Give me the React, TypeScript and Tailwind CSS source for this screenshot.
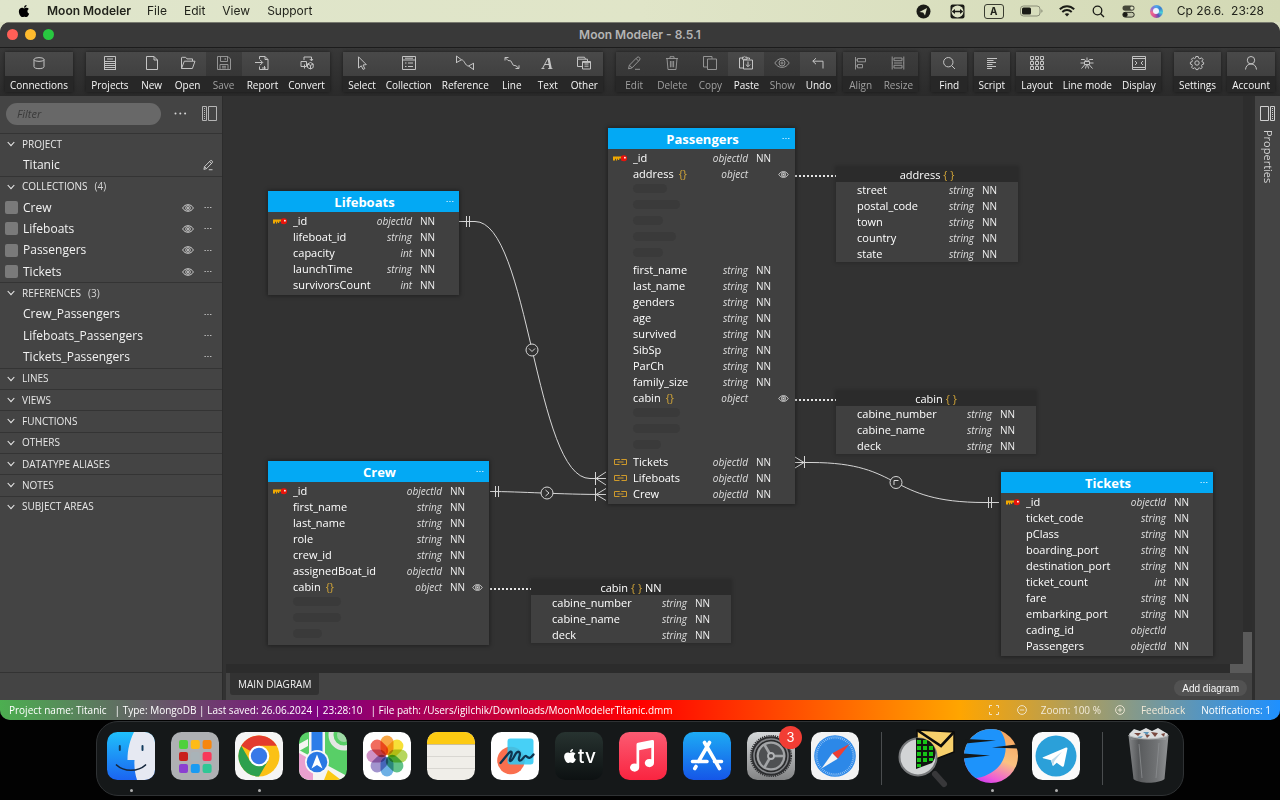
import type { ReactNode } from "react";
import { FaApple } from "react-icons/fa";

/* ---------- small shared icons ---------- */

const Dots = ({ className = "" }: { className?: string }) => (
  <svg width="8" height="3" viewBox="0 0 8 3" className={className} fill="currentColor">
    <rect x="0.5" y="1" width="1.3" height="1" />
    <rect x="3.3" y="1" width="1.3" height="1" />
    <rect x="6.1" y="1" width="1.3" height="1" />
  </svg>
);

const Eye = ({ className = "" }: { className?: string }) => (
  <svg viewBox="0 0 12 8" className={className} fill="none" stroke="currentColor" strokeWidth="1">
    <path d="M0.6 4C2 1.7 3.8 0.7 6 0.7S10 1.7 11.4 4C10 6.3 8.2 7.3 6 7.3S2 6.3 0.6 4z" />
    <circle cx="6" cy="4" r="2.3" />
    <circle cx="6" cy="4" r="0.7" fill="currentColor" />
  </svg>
);

const Chevron = () => (
  <svg width="8" height="6" viewBox="0 0 8 6" fill="none" stroke="currentColor" strokeWidth="1.1">
    <path d="M0.7 1L4 4.6L7.3 1" />
  </svg>
);

const KeyIcon = () => (
  <svg width="14" height="7" viewBox="0 0 14 7">
    <path d="M0 1.6H9V3.6H7.6V3.4H6.2V5H4.9V3.8H4.1V5.4H2.9V3.8H2V5.6H0z" fill="#f2a900" />
    <circle cx="11" cy="3.2" r="3" fill="#e8140c" />
    <rect x="8.2" y="0.8" width="3" height="4.8" fill="#e8140c" />
    <circle cx="11.9" cy="2.7" r="0.9" fill="#fff" />
  </svg>
);

const LinkIcon = () => (
  <svg width="15" height="8" viewBox="0 0 15 8" fill="none" stroke="#cf9a2b" strokeWidth="1">
    <path d="M6.8 1.5H1.5V6.5H6.500M8.300 1.500H13.500V6.500H8.500M4.500 4H10.500" />
  </svg>
);

const Pencil = ({ size = 16 }: { size?: number }) => (
  <svg width={size} height={size} viewBox="0 0 16 16" fill="none" stroke="currentColor" strokeWidth={size < 14 ? 1.2 : 1}>
    <path d="M2.5 13.8L3.4 10.2L11 2.4Q12.3 1.4 13.4 2.5T13.6 5L6 12.9zM10 3.5L12.6 6M3.4 10.2L6 12.9M9 14.3H14" />
  </svg>
);

/* ---------- toolbar ---------- */

const I = ({ children, w = 16 }: { children: ReactNode; w?: number }) => (
  <svg width={w} height="16" viewBox={`0 0 ${w} 16`} fill="none" stroke="currentColor" strokeWidth="1">
    {children}
  </svg>
);

const icons: Record<string, ReactNode> = {
  Connections: (
    <I>
      <ellipse cx="8" cy="4.5" rx="5" ry="1.9" />
      <path d="M3 4.5V11.7C3 14.3 13 14.3 13 11.7V4.5" />
    </I>
  ),
  Projects: (
    <I>
      <path d="M2.5 1.5H13.5V6.5H2.5zM5 4H11M2 8.5H14M2 10.5H14M2 12.5H14M2 14.5H14M2.5 6V15M13.5 6V15" />
    </I>
  ),
  New: (
    <I>
      <path d="M2.5 1.5H10L13.5 5V14.5H2.5zM10 1.5V5H13.5" />
    </I>
  ),
  Open: (
    <I>
      <path d="M1.5 13.5V3Q1.5 2.3 2.2 2.3H5.6L7 3.9H12.5V6M1.5 13.5L4.3 6.2H15L12.4 13.5z" />
    </I>
  ),
  Save: (
    <I>
      <path d="M1.5 1.5H12L14.5 4V14.5H1.5zM4.5 1.5V6.5H11.5V1.5M9.2 3V5M4 14.5V9.5H12V14.5M6 11.3H10M6 12.9H10" />
    </I>
  ),
  Report: (
    <I>
      <path d="M5.5 4V1.5H11L14 4.5V14.5H5.5V11.5M11 1.5V4.5H14M1 7.5H8.5M6 4.8L8.7 7.5L6 10.2M8 13H12M10.5 11V14.5" />
    </I>
  ),
  Convert: (
    <I>
      <path d="M5 5V2H12.5V5.5M10.8 4L12.5 5.9L14 4M2 6.5H7.5V11.5H2zM5.5 9.5V13.5M8.5 9L11.5 7.5L14.2 9V12.5L11.5 14L8.5 12.5zM8.5 9L11.5 10.4L14.2 9M11.5 10.4V14" />
    </I>
  ),
  Select: (
    <I>
      <path d="M4.5 1.8L12.3 9.6L9 10L10.8 13.6L9 14.4L7.3 10.8L4.5 13z" />
    </I>
  ),
  Collection: (
    <I>
      <path d="M1.5 1.5H14.5V14.5H1.5zM1.5 5H14.5M4 3.2H12M4 8H5.5M7 8H12M4 11.5H5.5M7 11.5H12" />
    </I>
  ),
  Reference: (
    <I w={20}>
      <path d="M1.5 1V8M1.500 1L6.500 4.800L1.500 7.500M6.500 4.800C9.500 4.800 10 11 13.500 11M18.500 8V15M18.500 8.300L13.500 11L18.500 14.500" />
    </I>
  ),
  Line: (
    <I>
      <path d="M1 5.500V2.500H4.500M15 10.300V13.500H11.500M1.300 2.800L4 5.500Q7.600 5 8 8T12 10.800L14.700 13.200" />
    </I>
  ),
  Other: (
    <I>
      <path d="M6 11.5H1.5V4.2H11.5V6M1.5 4.2V2.2H8.5L9.5 4.2M6.5 6.5H14.5V14H6.5zM8.5 9H12.5M8.5 11.2H12.5M6.5 7.4H14.5" />
    </I>
  ),
  Edit: <Pencil />,
  Delete: (
    <I>
      <path d="M2 3.5H14M6 3.5V1.7H10V3.5M3 3.5L4 14.5H12L13 3.5M6.4 6V12.3M8 6V12.3M9.6 6V12.3" />
    </I>
  ),
  Copy: (
    <I>
      <path d="M5 12H1.5V1.5H10V3.8M5.5 4H14.5V14.5H5.5z" />
    </I>
  ),
  Paste: (
    <I>
      <path d="M5 13H1.5V3H4.5M9 3H11.5V4.3M4.5 4.3V2.2H6Q6.7 0.8 7.4 2.2H9V4.3zM5.5 5H14.5V14H5.5zM10 6.5V11.5M7.8 9.5L10 11.7L12.2 9.5" />
    </I>
  ),
  Show: (
    <I>
      <path d="M0.8 8C2.8 5 5 3.6 8 3.6S13.2 5 15.2 8C13.2 11 11 12.4 8 12.4S2.8 11 0.8 8z" />
      <circle cx="8" cy="8" r="3" />
      <circle cx="8" cy="8" r="1" />
    </I>
  ),
  Undo: (
    <I>
      <path d="M6 3.2L2.8 6.2L6 9.2M2.8 6.2H13V13.5" />
    </I>
  ),
  Align: (
    <I>
      <path d="M2.5 2V14.5M4.5 3.5H12.5V6.8H4.5zM4.5 9.5H9.5V12.8H4.5zM2.5 5H4.5M2.5 11H4.5" />
    </I>
  ),
  Resize: (
    <I>
      <path d="M2.2 1.5V14.5M13.8 1.5V14.5M4 3H12V5.7H4zM4 10.3H12V13H4zM4 8H12M2.2 8H3M13 8H13.8" />
    </I>
  ),
  Find: (
    <I>
      <circle cx="7.3" cy="7.2" r="4.7" />
      <path d="M10.6 10.6L14 14" />
    </I>
  ),
  Script: (
    <I>
      <path d="M3 3.5H13M3 5.5H9.5M3 7.5H12M3 9.5H8.5M3 11.5H12M3 13.5H8" />
    </I>
  ),
  Layout: (
    <I>
      <path d="M1.5 1.5h3v3h-3zM6.5 1.5h3v3h-3zM11.5 1.5h3v3h-3zM1.5 6.5h3v3h-3zM6.5 6.5h3v3h-3zM11.5 6.5h3v3h-3zM1.5 11.5h3v3h-3zM6.5 11.5h3v3h-3zM11.5 11.5h3v3h-3zM3 4.5v2M8 4.5v2M13 4.5v2M3 9.5v2M8 9.5v2M13 9.5v2" />
    </I>
  ),
  "Line mode": (
    <I>
      <path d="M2 4.500H5.500L7 6.500M14 4.500H10.500L9 6.500M1.500 8H5.500M10.500 8H14.500M8 2.500V6.500M2.500 13.500L6 9.500M13.500 13.500L10 9.500M5.500 6.500H10.500V9.500H5.500zM6.500 13.500L7.500 9.500M9.500 13.500L8.500 9.500" />
    </I>
  ),
  Display: (
    <I>
      <path d="M1.5 1.5H14.5V12.5H1.5zM1.5 3.5H14.5M1.5 14.5H14.5M1.5 12.5V14.5M14.5 12.5V14.5M4 6L6 8L4 10M12 6L10 8L12 10" />
    </I>
  ),
  Settings: (
    <I>
      <circle cx="8" cy="8" r="2.2" />
      <path d="M6.8 1.5H9.2L9.6 3.2L10.9 3.8L12.5 2.8L14 4.6L12.9 6L13.2 7L14.6 7.4V9.2L13 9.6L12.5 10.8L13.3 12.4L11.8 13.8L10.4 12.9L9.4 13.2L9 14.6H7L6.6 13.2L5.5 12.8L4 13.7L2.6 12.2L3.4 10.8L3 9.6L1.4 9.1V7.2L3 6.8L3.4 5.6L2.5 4.2L4 2.7L5.5 3.6L6.5 3.1z" />
    </I>
  ),
  Account: (
    <I>
      <circle cx="8" cy="5.2" r="3.7" />
      <path d="M2.5 14.5C2.8 11 5 9 8 9S13.2 11 13.5 14.5" />
    </I>
  ),
};

type Tool = { label: string; off?: boolean };
const t = (label: string): Tool => ({ label });
const d = (label: string): Tool => ({ label, off: true });

const ToolGroup = ({ tools, className = "" }: { tools: Tool[]; className?: string }) => (
  <div className={`flex h-10 shrink-0 rounded-[3px] shadow-[0_0_3px_1px_rgba(0,0,0,0.3)] ${className}`}>
    {tools.map(({ label, off }) => (
      <button
        key={label}
        disabled={off}
        className={`flex min-w-9 flex-col items-center text-[10px] font-medium whitespace-nowrap ${off ? "text-[#a0a0a0]" : "text-[#f6f6f6]"}`}
      >
        <span
          className={`flex h-6 w-full items-center justify-center bg-linear-to-b pb-[2px] ${
            off ? "from-[#3d3d3d] to-[#363636] text-[#949494]" : "from-[#494949] to-[#404040] text-[#c4c4c4]"
          }`}
        >
          {label === "Text" ? (
            <span aria-hidden className="font-['Liberation_Serif',serif] text-[17px] leading-none font-bold italic">
              A
            </span>
          ) : (
            icons[label]
          )}
        </span>
        <span className="flex h-4 w-full items-center justify-center bg-[#272727] px-[5px] pt-[2px] leading-4">
          {label}
        </span>
      </button>
    ))}
  </div>
);

/* ---------- sidebar ---------- */

const SectionRow = ({ title, count }: { title: string; count?: number }) => (
  <button className="flex items-center border-t border-[#343434] pl-[7px] text-left text-[10px] font-medium text-[#e8e8e8]">
    <Chevron />
    <span className="ml-[7px]">{title}</span>
    {count !== undefined && <span className="ml-[7px] text-[#d4d4d4]">({count})</span>}
  </button>
);

const ItemRow = ({ name, kind }: { name: string; kind: "project" | "collection" | "reference" }) => (
  <div className="flex items-center pr-[10px] pl-[5px] text-[12px] text-[#f2f2f2]">
    <span className={`mr-[5px] size-[13px] rounded-[2px] ${kind === "collection" ? "bg-[#7a7a7a]" : ""}`} />
    <span className="flex-1">{name}</span>
    {kind === "collection" && (
      <button aria-label={`Toggle ${name}`} className="mr-[10px] text-[#c8c8c8]">
        <Eye className="h-2 w-3" />
      </button>
    )}
    {kind === "project" ? (
      <button aria-label="Edit project" className="-mr-1 p-[2px] text-[#d8d8d8]">
        <Pencil size={12} />
      </button>
    ) : (
      <button aria-label={`${name} menu`} className="text-[#c8c8c8]">
        <Dots />
      </button>
    )}
  </div>
);

const PanelIcon = ({ flip = false }: { flip?: boolean }) => (
  <svg width="15" height="15" viewBox="0 0 15 15" fill="none" stroke="currentColor" className={flip ? "-scale-x-100" : ""}>
    <path d="M0.5 0.5H4.5V14.5H0.5zM6.5 0.5H14.5V14.5H6.5z" />
    <path d="M2.5 2V13" strokeDasharray="1 1" />
  </svg>
);

const Sidebar = () => (
  <aside className="flex w-[222px] shrink-0 flex-col bg-[#444444]">
    <div className="flex h-[37px] items-center pb-[2px] pl-[6px]">
      <input
        type="text"
        aria-label="Filter"
        placeholder="Filter"
        className="h-[22px] w-[155px] rounded-full bg-[#686868] px-[11px] text-[11px] italic outline-none placeholder:text-[#3a3a3a]"
      />
      <button aria-label="More" className="ml-[13px] text-[#d6d6d6]">
        <svg width="13" height="3" viewBox="0 0 13 3" fill="currentColor">
          <circle cx="1.5" cy="1.5" r="1" />
          <circle cx="6.3" cy="1.5" r="1" />
          <circle cx="11.1" cy="1.5" r="1" />
        </svg>
      </button>
      <button aria-label="Toggle panel" className="ml-[15px] text-[#b5b5b5]">
        <PanelIcon />
      </button>
    </div>
    <div className="grid h-[384px] auto-rows-fr">
      <SectionRow title="PROJECT" />
      <ItemRow name="Titanic" kind="project" />
      <SectionRow title="COLLECTIONS" count={4} />
      <ItemRow name="Crew" kind="collection" />
      <ItemRow name="Lifeboats" kind="collection" />
      <ItemRow name="Passengers" kind="collection" />
      <ItemRow name="Tickets" kind="collection" />
      <SectionRow title="REFERENCES" count={3} />
      <ItemRow name="Crew_Passengers" kind="reference" />
      <ItemRow name="Lifeboats_Passengers" kind="reference" />
      <ItemRow name="Tickets_Passengers" kind="reference" />
      <SectionRow title="LINES" />
      <SectionRow title="VIEWS" />
      <SectionRow title="FUNCTIONS" />
      <SectionRow title="OTHERS" />
      <SectionRow title="DATATYPE ALIASES" />
      <SectionRow title="NOTES" />
      <SectionRow title="SUBJECT AREAS" />
    </div>
    <div className="mt-auto h-[28px] border-t border-[#333333]" />
  </aside>
);

/* ---------- diagram ---------- */

type Field = { n?: string; ty?: string; nn?: boolean; icon?: "key" | "link"; braces?: boolean; eye?: boolean; bar?: number };

const f = (n: string, ty: string, nn = true): Field => ({ n, ty, nn });
const bar = (w: number): Field => ({ bar: w });
const id: Field = { n: "_id", ty: "objectId", nn: true, icon: "key" };
const link = (n: string): Field => ({ n, ty: "objectId", nn: true, icon: "link" });

const Braces = () => <span className="text-[#d3a638]">{"{ }"}</span>;

const FieldTable = ({ fields, nested = false }: { fields: Field[]; nested?: boolean }) => (
  <table className="w-full table-fixed border-collapse">
    <colgroup>
      <col className={nested ? "w-[21px]" : "w-[25px]"} />
      <col />
      <col className="w-[50px]" />
      <col className="w-[30px]" />
      <col className={nested ? "w-[14px]" : "w-[17px]"} />
    </colgroup>
    <tbody>
      {fields.map((x, i) =>
        x.bar ? (
          <tr key={i} className="h-4">
            <td />
            <td colSpan={4} className="p-0">
              <div className="mb-1 h-[9px] rounded-full bg-[#3a3a3a]" style={{ width: x.bar }} />
            </td>
          </tr>
        ) : (
          <tr key={i} className="h-4 leading-4">
            <td className="p-0">
              <span className="flex pl-[5px]">
                {x.icon === "key" && <KeyIcon />}
                {x.icon === "link" && <LinkIcon />}
              </span>
            </td>
            <td className="p-0 text-[11px] whitespace-nowrap text-white">
              {x.n}
              {x.braces && <span className="ml-[5px] font-medium text-[#d3a638]">{"{}"}</span>}
            </td>
            <td className="p-0 text-right text-[10px] text-[#dedede] italic">{x.ty}</td>
            <td className="p-0 pl-2 text-[10px] font-medium text-[#f0f0f0]">{x.nn ? "NN" : ""}</td>
            <td className="p-0">{x.eye && <Eye className="h-[7px] w-[11px] text-[#dcdcdc]" />}</td>
          </tr>
        ),
      )}
    </tbody>
  </table>
);

const Node = ({ title, place, fields }: { title: string; place: string; fields: Field[] }) => (
  <section className={`absolute bg-[#404040] pb-[2px] shadow-[0_0_4px_1px_rgba(0,0,0,0.35)] ${place}`}>
    <header className="relative mb-px flex h-[21px] items-center justify-center bg-[#03a9f4] pt-[2px] pl-[2px]">
      <h2 className="text-[13px] font-bold text-white">{title}</h2>
      <button aria-label={`${title} menu`} className="absolute top-[9px] right-[5px] text-[#cdeeff]">
        <Dots />
      </button>
    </header>
    <FieldTable fields={fields} />
  </section>
);

const NestedNode = ({ title, nn, place, fields }: { title: string; nn?: boolean; place: string; fields: Field[] }) => (
  <section className={`absolute bg-[#404040] shadow-[0_0_4px_1px_rgba(0,0,0,0.2)] ${place}`}>
    <header className="h-[15px] bg-[#2b2b2b] text-center text-[11px] leading-[15px] text-white">
      {title} <Braces />
      {nn ? " NN" : ""}
    </header>
    <FieldTable fields={fields} nested />
  </section>
);

const Links = () => (
  <svg className="absolute top-0 left-0 h-[568px] w-[1020px]" viewBox="223 96 1020 568" fill="none" stroke="#d6d6d6" strokeWidth="1">
    <path d="M459 221.5H475C529 221.5 535 478.5 590 478.5H606" />
    <path d="M466.5 216V227M469.5 216V227" />
    <path d="M595.5 472V485M606 472L596 478.5L606 485" />
    <path d="M490 491.5C520 491.5 560 494.5 606 494.5" />
    <path d="M495.5 486V497M498.5 486V497" />
    <path d="M595.5 488V501M606 488.500L596 494.5L606 500.500" />
    <path d="M795 462.500H811C905 462.500 885 502.500 985 502.500H999" />
    <path d="M804.500 456V468M795 457L804 462.500L795 468" />
    <path d="M988.500 497V508M991.500 497V508" />
    <g fill="#323232">
      <circle cx="532" cy="350" r="6" />
      <circle cx="547" cy="493" r="6" />
      <circle cx="896" cy="482.500" r="6" />
      <path d="M529 348.500L532 351.500L535 348.500M545.500 490L549 493L545.500 496M894 485V480.500H898.500" />
    </g>
    <g stroke="#e6e6e6" strokeWidth="2" strokeDasharray="2 2">
      <path d="M795 176H836M795 400H836M490 589H531" />
    </g>
  </svg>
);

const Canvas = () => (
  <div className="relative min-h-0 flex-1 overflow-hidden bg-[#323232]">
    <Links />
    <Node
      title="Lifeboats"
      place="left-[45px] top-[95px] w-[191px]"
      fields={[id, f("lifeboat_id", "string"), f("capacity", "int"), f("launchTime", "string"), f("survivorsCount", "int")]}
    />
    <Node
      title="Crew"
      place="left-[45px] top-[365px] w-[221px]"
      fields={[
        id,
        f("first_name", "string"),
        f("last_name", "string"),
        f("role", "string"),
        f("crew_id", "string"),
        f("assignedBoat_id", "objectId"),
        { n: "cabin", ty: "object", nn: true, braces: true, eye: true },
        bar(48),
        bar(48),
        bar(29),
      ]}
    />
    <Node
      title="Passengers"
      place="left-[385px] top-[32px] w-[187px]"
      fields={[
        id,
        { n: "address", ty: "object", braces: true, eye: true },
        bar(34),
        bar(47),
        bar(30),
        bar(43),
        bar(30),
        f("first_name", "string"),
        f("last_name", "string"),
        f("genders", "string"),
        f("age", "string"),
        f("survived", "string"),
        f("SibSp", "string"),
        f("ParCh", "string"),
        f("family_size", "string"),
        { n: "cabin", ty: "object", braces: true, eye: true },
        bar(47),
        bar(47),
        bar(28),
        link("Tickets"),
        link("Lifeboats"),
        link("Crew"),
      ]}
    />
    <Node
      title="Tickets"
      place="left-[778px] top-[376px] w-[212px]"
      fields={[
        id,
        f("ticket_code", "string"),
        f("pClass", "string"),
        f("boarding_port", "string"),
        f("destination_port", "string"),
        f("ticket_count", "int"),
        f("fare", "string"),
        f("embarking_port", "string"),
        f("cading_id", "objectId", false),
        f("Passengers", "objectId"),
      ]}
    />
    <NestedNode
      title="address"
      place="left-[613px] top-[71px] w-[182px]"
      fields={["street", "postal_code", "town", "country", "state"].map((n) => f(n, "string"))}
    />
    <NestedNode
      title="cabin"
      place="left-[613px] top-[295px] w-[200px]"
      fields={["cabine_number", "cabine_name", "deck"].map((n) => f(n, "string"))}
    />
    <NestedNode
      title="cabin"
      nn
      place="left-[308px] top-[484px] w-[200px]"
      fields={["cabine_number", "cabine_name", "deck"].map((n) => f(n, "string"))}
    />
  </div>
);

/* ---------- menu bar ---------- */

const MenuBar = () => (
  <nav className="flex h-[22px] shrink-0 items-center bg-linear-to-r from-[#dfe5cb] via-[#e0e5c8] to-[#d3d9b5] pr-4 pl-[17px] font-['Inter',sans-serif] text-[12px] text-[#22241c]">
    <FaApple className="mr-4 size-[14px] text-black" />
    <button className="mr-4 font-semibold">Moon Modeler</button>
    <button className="mr-[17px]">File</button>
    <button className="mr-[17px]">Edit</button>
    <button className="mr-[17px]">View</button>
    <button>Support</button>
    <div className="ml-auto flex items-center">
      <svg width="15" height="15" viewBox="0 0 15 15">
        <circle cx="7.500" cy="7.500" r="7" fill="#1a1b16" />
        <path d="M3.500 8L11 4L9 11.500L7.200 8.500z" fill="#dde2c4" />
      </svg>
      <svg width="15" height="15" viewBox="0 0 15 15" className="ml-[19px]">
        <rect x="0.500" y="0.500" width="14" height="14" rx="2" fill="#1a1b16" />
        <circle cx="7.500" cy="7.500" r="6" fill="#dde2c4" />
        <path d="M1.800 7.500L5 5V6.700H10V5L13.200 7.500L10 10V8.300H5V10z" fill="#1a1b16" />
      </svg>
      <span className="ml-[19px] flex h-[15px] w-5 items-center justify-center rounded-[3px] border border-[#3a3c30] text-[10px] font-bold">
        A
      </span>
      <svg width="23" height="12" viewBox="0 0 23 12" className="ml-[16px]">
        <rect x="0.500" y="1" width="19.500" height="10" rx="3" fill="none" stroke="#8a8d78" />
        <rect x="2" y="2.500" width="9" height="7" rx="1.500" fill="#1a1b16" />
        <path d="M21.300 4.200V7.800Q22.600 7.300 22.600 6T21.300 4.200" fill="#8a8d78" />
      </svg>
      <svg width="16" height="12" viewBox="0 0 16 12" fill="none" stroke="#1a1b16" strokeWidth="1.900" className="ml-[16px]">
        <path d="M0.800 4.300C5 0.200 11 0.200 15.200 4.300M3.300 7C6 4.300 10 4.300 12.700 7" />
        <path d="M8 11.500L5.700 9.100C7 7.900 9 7.900 10.300 9.100z" fill="#1a1b16" stroke="none" />
      </svg>
      <svg width="13" height="13" viewBox="0 0 13 13" fill="none" stroke="#1a1b16" strokeWidth="1.300" className="ml-[17px]">
        <circle cx="5.500" cy="5.500" r="4.300" />
        <path d="M8.700 8.700L12 12" />
      </svg>
      <svg width="13" height="13" viewBox="0 0 13 13" className="ml-[17px]">
        <rect x="0.500" y="0.500" width="12" height="5.200" rx="2.600" fill="#45473a" />
        <circle cx="9.900" cy="3.100" r="1.700" fill="#dde2c4" />
        <rect x="0.800" y="7.300" width="11.400" height="4.800" rx="2.400" fill="#c4c8ad" stroke="#2c2e24" />
        <circle cx="3.300" cy="9.700" r="2.400" fill="#1a1b16" />
      </svg>
      <span className="ml-[15px] flex size-[13px] items-center justify-center rounded-full bg-[conic-gradient(#4aa8e8,#3c7fd0,#48d0d8,#5b50b8,#d94f96,#f06a8e,#8a6fd8,#4aa8e8)]">
        <span className="size-[6px] rounded-full bg-[#eef4ff]" />
      </span>
      <span className="ml-[14px] whitespace-pre">Ср 26.6.  23:28</span>
    </div>
  </nav>
);

/* ---------- status bar ---------- */

const StatusBar = () => (
  <footer className="flex h-[20px] shrink-0 items-center bg-[linear-gradient(to_right,#4caf50,#800080,#ff0000,#ffa500,#1e90ff)] pr-[9px] pl-[9px] text-[10px] text-white">
    <span>Project name: Titanic</span>
    <span className="ml-2">| Type: MongoDB | Last saved: 26.06.2024 | 23:28:10</span>
    <span className="ml-2">| File path: /Users/igilchik/Downloads/MoonModelerTitanic.dmm</span>
    <div className="ml-auto flex items-center text-[#f2ead8]">
      <button aria-label="Fit to screen" className="mr-[18px]">
        <svg width="10" height="10" viewBox="0 0 10 10" fill="none" stroke="currentColor" strokeWidth="0.900">
          <path d="M0.500 3V0.500H3M7 0.500H9.500V3M9.500 7V9.500H7M3 9.500H0.500V7" />
        </svg>
      </button>
      <button aria-label="Zoom out" className="mr-[14px]">
        <svg width="10" height="10" viewBox="0 0 10 10" fill="none" stroke="currentColor" strokeWidth="0.900">
          <circle cx="5" cy="5" r="4.400" />
          <path d="M2.800 5H7.200" />
        </svg>
      </button>
      <span>Zoom: 100 %</span>
      <button aria-label="Zoom in" className="ml-[14px]">
        <svg width="10" height="10" viewBox="0 0 10 10" fill="none" stroke="currentColor" strokeWidth="0.900">
          <circle cx="5" cy="5" r="4.400" />
          <path d="M2.800 5H7.200M5 2.800V7.200" />
        </svg>
      </button>
      <button className="ml-4">Feedback</button>
      <button className="ml-4 text-white">Notifications: 1</button>
    </div>
  </footer>
);

/* ---------- dock ---------- */

const Svg48 = ({ children }: { children: ReactNode }) => (
  <svg viewBox="0 0 48 48" className="size-12 overflow-visible">
    {children}
  </svg>
);

const Base = ({ fill }: { fill: string }) => <rect width="48" height="48" rx="10.500" fill={fill} />;

const spokes = (n: number) => Array.from({ length: n }, (_, i) => (i * 360) / n);
const petals = ["#f7931e", "#f5d90a", "#a5cd39", "#3fb56f", "#4d9fe0", "#8e7cc3", "#c47ab8", "#ee4b3a"];
const tiles = ["#4fd13c", "#fdbb16", "#f7860f", "#c9201c", "#a9b3b8", "#f9395a", "#8b3fd1", "#1a9bf2", "#2fc795"];

const Finder = () => (
  <Svg48>
    <defs>
      <clipPath id="finder-clip">
        <rect width="48" height="48" rx="10.500" />
      </clipPath>
      <linearGradient id="finder-blue" x1="0" y1="0" x2="0" y2="1">
        <stop stopColor="#1fc0fb" />
        <stop offset="1" stopColor="#1b64f1" />
      </linearGradient>
    </defs>
    <g clipPath="url(#finder-clip)">
      <rect width="48" height="48" fill="url(#finder-blue)" />
      <path d="M27 0C23 8 20.500 17 20.500 28H27.500C27 35 28 42 30 48H48V0z" fill="#e6e9f2" />
    </g>
    <path d="M12.800 14V18M35.500 14V18" stroke="#123c5e" strokeWidth="2" strokeLinecap="round" />
    <path d="M9.500 33C17 40 31 40 38.500 33" fill="none" stroke="#14263c" strokeWidth="1.700" strokeLinecap="round" />
  </Svg48>
);

const Launchpad = () => (
  <Svg48>
    <Base fill="#aeb0b3" />
    {tiles.map((c, i) => (
      <rect key={c} x={8 + (i % 3) * 11.800} y={8 + Math.floor(i / 3) * 12} width="9" height="9" rx="2" fill={c} />
    ))}
  </Svg48>
);

const Chrome = () => (
  <Svg48>
    <Base fill="#f5f5f5" />
    <circle cx="24" cy="24" r="20.500" fill="#fbc116" />
    <path d="M24 24L6.300 13.700A20.500 20.500 0 0 1 41.700 13.700H24z" fill="#e33b2e" />
    <path d="M6.300 13.700A20.500 20.500 0 0 0 24 44.500L33 29L15 29z" fill="#2da04e" />
    <circle cx="24" cy="24" r="10.300" fill="#fff" />
    <circle cx="24" cy="24" r="8.200" fill="#3878e8" />
  </Svg48>
);

const Maps = () => (
  <Svg48>
    <defs>
      <clipPath id="maps-clip">
        <rect width="48" height="48" rx="10.500" />
      </clipPath>
    </defs>
    <g clipPath="url(#maps-clip)">
      <rect width="48" height="48" fill="#58cf67" />
      <path d="M0 18L48 44V52H0z" fill="#f4f4f2" />
      <path d="M0 21L14 29V48H0z" fill="#e9a0cf" />
      <path d="M25 48L29 38L42 48z" fill="#fbc914" />
      <path d="M10 0H26V26H10z" fill="#f4f4f2" />
      <path d="M12.500 0H23.500V24H12.500z" fill="#2b7de9" />
      <circle cx="45" cy="3" r="13" fill="none" stroke="#e4e6e4" strokeWidth="5" />
      <circle cx="45" cy="3" r="7" fill="#9fd8a6" />
      <path d="M0 12L9 7V14L0 19z" fill="#f4f4f2" />
    </g>
    <circle cx="18" cy="30" r="12" fill="#f7f7f7" />
    <circle cx="18" cy="30" r="10.300" fill="#2a78e4" />
    <path d="M18 22.500L23.500 36.500L18 33L12.500 36.500z" fill="#fff" />
  </Svg48>
);

const Photos = () => (
  <Svg48>
    <Base fill="#ffffff" />
    {petals.map((c, i) => (
      <rect key={c} x="17.500" y="3.500" width="13" height="19.500" rx="6.500" fill={c} opacity="0.820" transform={`rotate(${i * 45} 24 24)`} style={{ mixBlendMode: "multiply" }} />
    ))}
  </Svg48>
);

const Notes = () => (
  <Svg48>
    <Base fill="#f0eee9" />
    <path d="M0 12V10.500A10.500 10.500 0 0 1 10.500 0H37.500A10.500 10.500 0 0 1 48 10.500V12z" fill="#fdca12" />
    <path d="M0 12.500H48" stroke="#cdbf9a" />
    <path d="M0 24.500H48M0 36.500H48" stroke="#d3d1cc" strokeWidth="0.800" />
  </Svg48>
);

const Freeform = () => (
  <Svg48>
    <Base fill="#ffffff" />
    <circle cx="20" cy="28.500" r="13.800" fill="#fa6f4e" />
    <rect x="16.500" y="6.500" width="26" height="26" rx="3" fill="#2dc9f5" opacity="0.880" />
    <path d="M9.500 31C15 25 19 18 20.500 20S17 29 19.500 29S25 18 28 20S26 27 28.500 28.500S33 23 35 24S38 28.500 42.500 22.500" fill="none" stroke="#0f3550" strokeWidth="2.300" strokeLinecap="round" />
  </Svg48>
);

const AppleTv = () => (
  <div className="flex size-12 items-center justify-center rounded-[10px] bg-linear-to-b from-[#273330] to-[#0d1112] text-white">
    <FaApple className="size-4" />
    <span className="font-['Inter',sans-serif] text-[19px] leading-none font-medium">tv</span>
  </div>
);

const Music = () => (
  <Svg48>
    <defs>
      <linearGradient id="music-bg" x1="0" y1="0" x2="0" y2="1">
        <stop stopColor="#fb5b72" />
        <stop offset="1" stopColor="#fa2440" />
      </linearGradient>
    </defs>
    <Base fill="url(#music-bg)" />
    <path d="M17.500 12.500Q17.500 11 19 10.700L33 8Q35 7.600 35 9.400V31A4.600 4.100 0 1 1 32.300 27.300V15.800L20.200 18.200V35.500A4.600 4.100 0 1 1 17.500 31.800z" fill="#fff" />
  </Svg48>
);

const AppStore = () => (
  <Svg48>
    <defs>
      <linearGradient id="store-bg" x1="0" y1="0" x2="0" y2="1">
        <stop stopColor="#1dabf4" />
        <stop offset="1" stopColor="#1556e8" />
      </linearGradient>
    </defs>
    <Base fill="url(#store-bg)" />
    <path d="M26.500 10.500L15.500 29.500M21.500 10.500L36.500 36.500M9.500 29.500H24M31.500 29.500H38.500M13 34.500L11.800 36.500" fill="none" stroke="#fff" strokeWidth="3.600" strokeLinecap="round" />
  </Svg48>
);

const SystemSettings = () => (
  <div className="relative">
    <Svg48>
      <defs>
        <linearGradient id="settings-bg" x1="0" y1="0" x2="0" y2="1">
          <stop stopColor="#d5d8da" />
          <stop offset="1" stopColor="#838485" />
        </linearGradient>
      </defs>
      <Base fill="url(#settings-bg)" />
      <circle cx="24" cy="24" r="18.800" fill="#85878a" stroke="#2c2d2f" strokeWidth="2" />
      <circle cx="24" cy="24" r="20.300" fill="none" stroke="#2c2d2f" strokeWidth="1.600" strokeDasharray="1.200 1" />
      <circle cx="24" cy="24" r="15.500" fill="#4e5052" stroke="#2a2b2c" strokeWidth="1.500" />
      <circle cx="24" cy="24" r="13.300" fill="none" stroke="#a2a4a6" strokeWidth="2.200" />
      {[-30, 90, 210].map((a) => (
        <path key={a} d="M24 24V11" stroke="#a2a4a6" strokeWidth="2.600" transform={`rotate(${a} 24 24)`} />
      ))}
      <circle cx="24" cy="24" r="3" fill="#4a4b4d" stroke="#b2b4b6" strokeWidth="1.800" />
    </Svg48>
    <span className="absolute -top-[6px] -right-[7px] flex size-[23px] items-center justify-center rounded-full bg-[#f23d34] font-['Inter',sans-serif] text-[13px] text-white">
      3
    </span>
  </div>
);

const Safari = () => (
  <Svg48>
    <Base fill="#f3f3f3" />
    <circle cx="24" cy="24" r="20.800" fill="#2c88e8" />
    {spokes(60).map((a) => (
      <path key={a} d="M24 4.200V6.600" stroke="#dcecfb" strokeWidth="0.500" transform={`rotate(${a} 24 24)`} />
    ))}
    <path d="M38.500 12L26.700 26.700L21.300 21.300z" fill="#ee3f33" />
    <path d="M10.500 36.500L21.300 21.300L26.700 26.700z" fill="#f4f4f4" />
  </Svg48>
);

const MailSearch = () => (
  <Svg48>
    <path d="M13 -2L50 0V20L32 27L13 24z" fill="#f6cf6b" stroke="#0b0b0b" strokeWidth="1.500" />
    <path d="M13 -2L37 14L50 0" fill="none" stroke="#0b0b0b" strokeWidth="2.600" />
    <path d="M31 42L40 52" stroke="#38383a" strokeWidth="6" strokeLinecap="round" />
    <circle cx="14" cy="25" r="18.500" fill="#d2d4d5" stroke="#77797b" strokeWidth="2" />
    <path d="M12 6V37L28 31C33 24 33 15 25 9Q19 5.500 12 6z" fill="#101510" />
    <path d="M13 8h4v4h-4zM19 8h4v4h-4zM13 14h4v4h-4zM19 14h4v4h-4zM25 14h4v4h-4zM13 20h4v4h-4zM19 20h4v4h-4zM25 20h4v4h-4zM13 26h4v4h-4zM19 26h4v4h-4zM25 26h4v3h-4zM13 32h4v3h-4z" fill="#15c416" />
  </Svg48>
);

const Moon = () => (
  <Svg48>
    <defs>
      <linearGradient id="moon-warm" x1="0.700" y1="0" x2="0.300" y2="1">
        <stop stopColor="#f6a35c" />
        <stop offset="0.500" stopColor="#fac281" />
        <stop offset="0.850" stopColor="#ee5ad8" />
        <stop offset="1" stopColor="#c93af0" />
      </linearGradient>
      <clipPath id="moon-clip">
        <circle cx="23" cy="24" r="27" />
      </clipPath>
    </defs>
    <g clipPath="url(#moon-clip)">
      <rect x="-4" y="-3" width="54" height="54" fill="url(#moon-warm)" />
      <path d="M-4 -3H31C41 8 40 28 27 38Q18 45 8 46L-4 44z" fill="#1d93fb" />
    </g>
    <path d="M-2 7L28 8.500L-3 11.500zM51 12L24 15.500L52 16.500zM-5 21.500L22 23.500L-6 26.500z" fill="#151819" />
  </Svg48>
);

const Telegram = () => (
  <Svg48>
    <Base fill="#fafafa" />
    <circle cx="24" cy="24" r="20.500" fill="#2ba0d9" />
    <path d="M10.500 25.500L34 15.500Q35.800 15.200 35.400 17L32 33.500Q31.500 35.300 29.900 34.400L24.700 30.700L21.700 33.600Q20.500 34.400 20.300 32.700L19 28.200L11 26.300z" fill="#fff" />
    <path d="M19.300 28.200L30 19.800L22.500 28.900L21 33.700z" fill="#bfdcec" />
  </Svg48>
);

const Trash = () => (
  <Svg48>
    <defs>
      <linearGradient id="trash-body" x1="0" y1="0" x2="1" y2="0">
        <stop stopColor="#8c8e90" />
        <stop offset="0.250" stopColor="#5d5f61" />
        <stop offset="0.700" stopColor="#77797b" />
        <stop offset="1" stopColor="#9a9c9e" />
      </linearGradient>
    </defs>
    <path d="M4 2L9 -3L15 -1L21 -4L27 -1L33 -4L38 -1L43 2L41 8H6z" fill="#dcdedf" />
    <path d="M9 1L13 4L16 1zM26 0L30 5L33 1zM36 2L39 5L40 1zM20 2L22 6L25 3z" fill="#7a4a40" />
    <path d="M18 0L22 3L24 0zM12 5L15 7L18 4z" fill="#5a93b8" />
    <path d="M3.500 3.500C14 8 33 8 43.500 3.500L39.500 47C33 52 14.500 52 8.500 47z" fill="url(#trash-body)" opacity="0.930" />
    <path d="M3.500 3.500C14 8 33 8 43.500 3.500" fill="none" stroke="#b9bbbc" strokeWidth="1" />
    <path d="M14 12L17 46M34 11L31 46" stroke="#8c8e90" strokeWidth="0.800" fill="none" />
  </Svg48>
);

const DockItem = ({ label, running, children }: { label: string; running?: boolean; children: ReactNode }) => (
  <button aria-label={label} className="flex flex-col items-center">
    {children}
    <span className={`mt-[9px] size-[3px] rounded-full ${running ? "bg-[#b0b0b0]" : ""}`} />
  </button>
);

const Dock = () => (
  <div className="flex h-20 shrink-0 justify-center bg-[#020202] pt-px pb-[4px]">
    <div className="flex items-start gap-4 rounded-[22px] border border-[#2f3234] bg-[#151819] px-[10px] pt-[10px]">
      <DockItem label="Finder" running><Finder /></DockItem>
      <DockItem label="Launchpad"><Launchpad /></DockItem>
      <DockItem label="Chrome" running><Chrome /></DockItem>
      <DockItem label="Maps"><Maps /></DockItem>
      <DockItem label="Photos"><Photos /></DockItem>
      <DockItem label="Notes"><Notes /></DockItem>
      <DockItem label="Freeform"><Freeform /></DockItem>
      <DockItem label="Apple TV"><AppleTv /></DockItem>
      <DockItem label="Music"><Music /></DockItem>
      <DockItem label="App Store"><AppStore /></DockItem>
      <DockItem label="System Settings"><SystemSettings /></DockItem>
      <DockItem label="Safari"><Safari /></DockItem>
      <div className="mx-[6px] h-[53px] w-px bg-[#4a4d4f]" />
      <DockItem label="Mail search"><MailSearch /></DockItem>
      <DockItem label="Moon Modeler" running><Moon /></DockItem>
      <DockItem label="Telegram" running><Telegram /></DockItem>
      <div className="mx-[6px] h-[53px] w-px bg-[#4a4d4f]" />
      <DockItem label="Trash"><Trash /></DockItem>
    </div>
  </div>
);

/* ---------- page ---------- */

export default function App() {
  return (
    <div className="flex h-screen flex-col overflow-hidden bg-black">
      <MenuBar />
      <div className="flex min-h-0 flex-1 bg-[linear-gradient(#d9dec2_50%,#000_50%)]">
        <div className="flex min-w-0 flex-1 flex-col overflow-hidden rounded-[10px] bg-[#323232] font-['Open_Sans',sans-serif] text-[11px]">
          <header className="relative flex h-[26px] shrink-0 items-center justify-center border-t border-b border-t-[#77796e] border-b-[#1c1c1c] bg-[#393939] pb-px">
            <div className="absolute left-[7px] flex gap-[7px]">
              <button aria-label="Close" className="size-[11px] rounded-full bg-[#fe5f57]" />
              <button aria-label="Minimize" className="size-[11px] rounded-full bg-[#febb2e]" />
              <button aria-label="Maximize" className="size-[11px] rounded-full bg-[#28c840]" />
            </div>
            <h1 className="font-['Inter',sans-serif] text-[12px] font-semibold text-[#b4b4b4]">Moon Modeler - 8.5.1</h1>
          </header>
          <div className="flex h-12 shrink-0 items-start justify-between bg-linear-to-b from-[#383838] to-[#2a2a2a] px-[5px] pt-1">
            <ToolGroup tools={[t("Connections")]} />
            <ToolGroup tools={[t("Projects"), t("New"), t("Open"), d("Save"), t("Report"), t("Convert")]} className="ml-[7px]" />
            <ToolGroup tools={[t("Select"), t("Collection"), t("Reference"), t("Line"), t("Text"), t("Other")]} className="ml-[7px]" />
            <ToolGroup tools={[d("Edit"), d("Delete"), d("Copy"), t("Paste"), d("Show"), t("Undo")]} className="ml-[7px]" />
            <ToolGroup tools={[d("Align"), d("Resize")]} />
            <ToolGroup tools={[t("Find")]} className="ml-[7px]" />
            <ToolGroup tools={[t("Script")]} />
            <ToolGroup tools={[t("Layout"), t("Line mode"), t("Display")]} />
            <ToolGroup tools={[t("Settings")]} className="ml-[7px]" />
            <ToolGroup tools={[t("Account")]} />
          </div>
          <div className="flex min-h-0 flex-1">
            <Sidebar />
            <main className="flex min-w-0 flex-1 flex-col border-l border-[#2c2c2c] bg-[#323232]">
              <div className="flex min-h-0 flex-1">
                <Canvas />
                <div className="flex w-[9px] flex-col justify-end bg-[#2d2d2d]">
                  <div className="h-8 bg-[#5a5a5a]" />
                </div>
              </div>
              <div className="ml-[3px] flex h-[9px] shrink-0 justify-end bg-[#2c2c2c]">
                <div className="w-[22px] bg-[#5a5a5a]" />
              </div>
              <div className="ml-[3px] flex h-[27px] shrink-0 items-start justify-between bg-[#444444] pr-[5px] pl-1">
                <button className="h-[22px] rounded-b-[3px] bg-[#323232] px-2 text-[10px] font-medium text-[#f2f2f2]">MAIN DIAGRAM</button>
                <button className="mt-[7px] h-4 rounded-full bg-[#525252] px-2 font-['Liberation_Sans',sans-serif] text-[10px] text-[#f6f6f6]">
                  Add diagram
                </button>
              </div>
            </main>
            <aside className="flex w-7 shrink-0 flex-col items-center border-l-[3px] border-[#2e2e2e] bg-[#444444] pt-[10px] text-[#d0d0d0]">
              <PanelIcon flip />
              <button className="mt-[9px] text-[11px] leading-4 [writing-mode:vertical-rl]">Properties</button>
            </aside>
          </div>
          <StatusBar />
        </div>
      </div>
      <Dock />
    </div>
  );
}
